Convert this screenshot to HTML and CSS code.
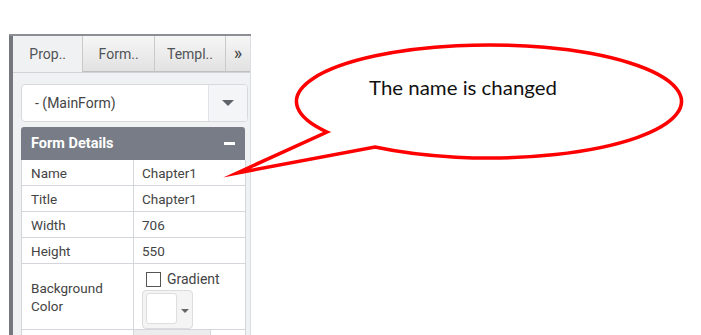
FILE: index.html
```html
<!DOCTYPE html>
<html>
<head>
<meta charset="utf-8">
<link rel="stylesheet" href="styles.css">
</head>
<body>
<div class="page">
  <div class="panel">
    <div class="rail"></div>
    <div class="main">
      <div class="tabs">
        <div class="tab active">Prop..</div>
        <div class="tab">Form..</div>
        <div class="tab">Templ..</div>
        <div class="tab more">&raquo;</div>
      </div>
      <div class="content">
        <div class="select">
          <div class="select-text">- (MainForm)</div>
          <div class="select-btn"><span class="caret"></span></div>
        </div>
        <div class="section-head">
          <span>Form Details</span>
          <span class="minus"></span>
        </div>
        <div class="grid">
          <div class="cell label">Name</div><div class="cell value">Chapter1</div>
          <div class="cell label">Title</div><div class="cell value">Chapter1</div>
          <div class="cell label">Width</div><div class="cell value">706</div>
          <div class="cell label">Height</div><div class="cell value">550</div>
          <div class="cell label">Background<br>Color</div>
          <div class="cell value tallv">
            <div class="check-row"><span class="checkbox"></span><span>Gradient</span></div>
            <div class="picker"><span class="swatch"></span><span class="mini-caret"></span></div>
          </div>
          <div class="cell label"></div><div class="cell value last"><span class="graybox"></span></div>
        </div>
      </div>
    </div>
  </div>
</div>
<svg class="callout" width="701" height="335" viewBox="0 0 701 335">
  <path d="M375,147 A192.5,56.5 0 1 0 327,132 L237,173 Z" fill="none" stroke="#ff0000" stroke-width="3.5" stroke-linejoin="miter" stroke-miterlimit="20"/>
  <text x="369" y="95" class="callout-text" textLength="188" lengthAdjust="spacingAndGlyphs">The name is changed</text>
</svg>
</body>
</html>
```

FILE: styles.css
```css
html, body {
  margin: 0;
  padding: 0;
  overflow: hidden;
  background: #ffffff;
  width: 701px;
  height: 335px;
}
body {
  font-family: Roboto, "Liberation Sans", sans-serif;
  color: #444;
}
.page {
  padding: 34px 0 0 9px;
}
.panel {
  width: 242px;
  display: flex;
  border-top: 2px solid #8b8e93;
  background: #f0f1f3;
  height: 299px;
}
.rail {
  width: 4px;
  background: #74787e;
  flex: none;
}
.main {
  flex: 1;
  border-right: 1px solid #dadde1;
  min-width: 0;
  overflow: hidden;
}
.tabs {
  display: flex;
  height: 36px;
  border-bottom: 1px solid #cfd2d6;
}
.tab {
  box-sizing: border-box;
  width: 72px;
  height: 36px;
  display: flex;
  align-items: center;
  justify-content: center;
  font-size: 14px;
  color: #505357;
  background: linear-gradient(#f6f6f6, #e2e2e2);
  border-left: 1px solid #c9c9c9;
  border-bottom: 1px solid #c0c0c0;
}
.tab.active {
  width: 70px;
  background: #f0f1f3;
  border-left: none;
  border-bottom: none;
}
.tab.more {
  width: 25px;
  font-size: 18px;
  color: #444;
  padding-bottom: 2px;
}
.content {
  padding: 11px 2px 0 8px;
}
.select {
  display: flex;
  height: 38px;
  box-sizing: border-box;
  border: 1px solid #d6d9dd;
  border-radius: 4px;
  background: #fff;
  overflow: hidden;
}
.select-text {
  flex: 1;
  display: flex;
  align-items: center;
  padding-left: 13px;
  font-size: 14px;
  color: #444;
}
.select-btn {
  width: 38px;
  border-left: 1px solid #e1e3e6;
  background: #f4f5f6;
  display: flex;
  align-items: center;
  justify-content: center;
}
.caret {
  width: 0;
  height: 0;
  border-left: 6px solid transparent;
  border-right: 6px solid transparent;
  border-top: 6px solid #5f636a;
}
.section-head {
  margin-top: 5px;
  width: 224px;
  height: 33px;
  box-sizing: border-box;
  background: #777c86;
  border-radius: 3px 3px 0 0;
  display: flex;
  align-items: center;
  justify-content: space-between;
  padding: 0 10px 0 10px;
  color: #fff;
  font-weight: bold;
  font-size: 14.5px;
}
.minus {
  width: 11px;
  height: 3px;
  background: #fff;
  margin-top: -1px;
}
.grid {
  width: 224px;
  display: grid;
  grid-template-columns: 112px 112px;
  grid-template-rows: 26px 26px 26px 26px 66px 26px;
  background: #fff;
  border-left: 1px solid #d3d6db;
  box-sizing: border-box;
}
.cell {
  box-sizing: border-box;
  border-right: 1px solid #d3d6db;
  border-bottom: 1px solid #d3d6db;
  font-size: 13.5px;
  color: #444;
  display: flex;
  align-items: center;
  line-height: 18px;
}
.label {
  padding-left: 9px;
}
.value {
  padding-left: 8px;
}
.tallv {
  flex-direction: column;
  align-items: flex-start;
  padding-top: 7px;
}
.check-row {
  display: flex;
  align-items: center;
  gap: 6px;
  padding-left: 4px;
  height: 16px;
  font-size: 14px;
}
.checkbox {
  width: 15px;
  height: 15px;
  box-sizing: border-box;
  border: 1px solid #555;
  background: #fff;
}
.picker {
  margin-top: 3px;
  width: 51px;
  height: 40px;
  box-sizing: border-box;
  border: 1px solid #dcdcdc;
  border-radius: 4px;
  background: #f4f4f4;
  display: flex;
  align-items: flex-start;
  padding: 2px 0 0 3px;
  gap: 4px;
}
.swatch {
  width: 31px;
  height: 31px;
  box-sizing: border-box;
  border: 1px solid #dedede;
  border-radius: 3px;
  background: #fff;
}
.mini-caret {
  margin-top: 16px;
  width: 0;
  height: 0;
  border-left: 4px solid transparent;
  border-right: 4px solid transparent;
  border-top: 4px solid #666;
}
.last {
  padding-left: 0;
  align-items: stretch;
}
.graybox {
  width: 76px;
  background: #ececec;
  border-right: 1px solid #d3d6db;
}
.callout {
  position: absolute;
  left: 0;
  top: 0;
  pointer-events: none;
}
.callout-text {
  font-family: Lato, "Open Sans", sans-serif;
  font-weight: 400;
  font-size: 19px;
  fill: #111;
}
```
